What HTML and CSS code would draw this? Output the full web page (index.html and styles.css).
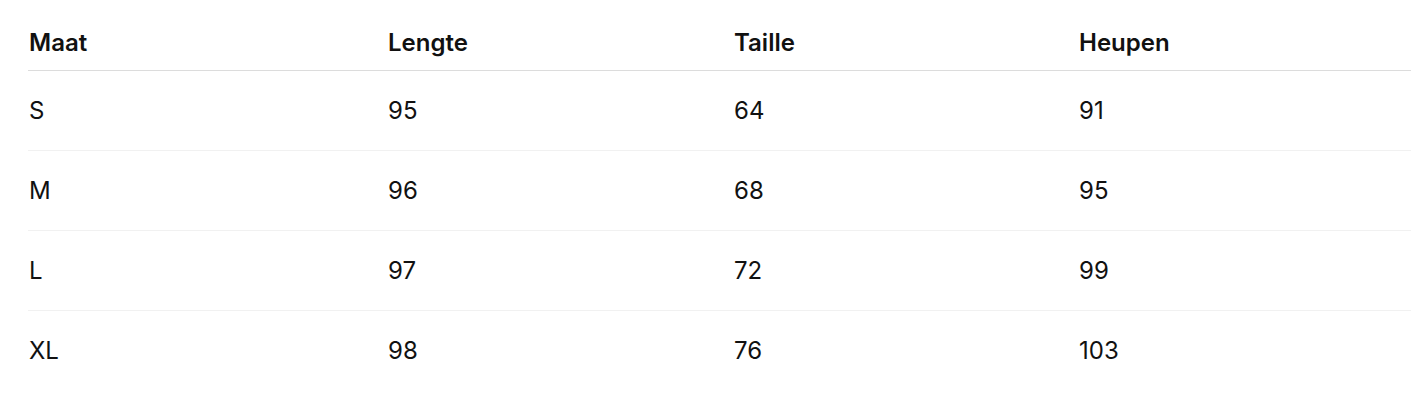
FILE: index.html
```html
<!DOCTYPE html>
<html lang="nl">
<head>
<meta charset="utf-8">
<title>Maattabel</title>
<link rel="stylesheet" href="styles.css">
</head>
<body>
<div class="page">
  <table class="size-table">
    <colgroup>
      <col class="c1"><col class="c2"><col class="c3"><col class="c4">
    </colgroup>
    <thead>
      <tr><th>Maat</th><th>Lengte</th><th>Taille</th><th>Heupen</th></tr>
    </thead>
    <tbody>
      <tr><td>S</td><td>95</td><td>64</td><td>91</td></tr>
      <tr><td>M</td><td>96</td><td>68</td><td>95</td></tr>
      <tr><td>L</td><td>97</td><td>72</td><td>99</td></tr>
      <tr><td>XL</td><td>98</td><td>76</td><td>103</td></tr>
    </tbody>
  </table>
</div>
</body>
</html>
```
FILE: styles.css
```css
html, body {
  margin: 0;
  padding: 0;
  background: #ffffff;
}
body {
  font-family: Inter, "Liberation Sans", sans-serif;
  color: #111111;
}
.page {
  padding: 15px 13px 0 28px;
}
.size-table {
  width: 100%;
  border-collapse: collapse;
  table-layout: fixed;
  font-size: 24px;
  line-height: 27px;
}
.c1 { width: 359px; }
.c2 { width: 346px; }
.c3 { width: 345px; }
.c4 { width: auto; }
.size-table th,
.size-table td {
  text-align: left;
  padding-left: 1px;
  padding-right: 0;
}
.size-table th {
  font-weight: 600;
  padding-top: 14px;
  padding-bottom: 14px;
  border-bottom: 1px solid #dcdcdc;
}
.size-table td {
  padding-top: 26px;
  padding-bottom: 26px;
  border-bottom: 1px solid #f1f1f1;
}
.size-table tbody tr:last-child td {
  border-bottom: none;
}
```
